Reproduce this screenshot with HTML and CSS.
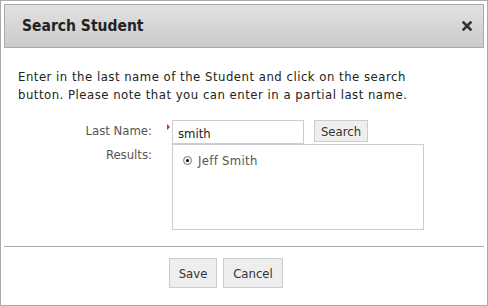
FILE: index.html
```html
<!DOCTYPE html>
<html>
<head>
<meta charset="utf-8">
<link rel="stylesheet" href="styles.css">
</head>
<body>
<div class="dialog">
  <div class="header">
    <span class="title">Search Student</span>
    <svg class="close" width="10" height="10" viewBox="0 0 10 10"><path d="M1.5 1.5 L8.5 8.5 M8.5 1.5 L1.5 8.5" stroke="#333" stroke-width="2.6" stroke-linecap="square"/></svg>
  </div>
  <div class="content">
    <p class="intro">Enter in the last name of the Student and click on the search button. Please note that you can enter in a partial last name.</p>
    <div class="form">
      <label class="label">Last Name:</label>
      <div class="field">
        <span class="req"></span>
        <input class="text" type="text" value="smith">
        <button class="btn search">Search</button>
      </div>
      <label class="label">Results:</label>
      <div class="results">
        <label class="option"><span class="radio"><span class="dot"></span></span>Jeff Smith</label>
      </div>
    </div>
  </div>
  <div class="footer">
    <button class="btn save">Save</button>
    <button class="btn cancel">Cancel</button>
  </div>
</div>
</body>
</html>
```
FILE: styles.css
```css
html, body {
  margin: 0;
  padding: 0;
  background: #fff;
}
.dialog {
  box-sizing: border-box;
  width: 488px;
  height: 306px;
  border: 1px solid #aaa;
  padding: 3px 3px 0;
  font-family: "DejaVu Sans Condensed", "DejaVu Sans", sans-serif;
  font-size: 13px;
  color: #222;
  display: flex;
  flex-direction: column;
}
.header {
  box-sizing: border-box;
  height: 44px;
  flex: none;
  border: 1px solid #aaa;
  background: linear-gradient(#e1e1e1, #cbcbcb);
  display: flex;
  align-items: center;
  justify-content: space-between;
  padding: 0 11px 0 17px;
}
.title {
  font-size: 15.5px;
  font-weight: bold;
  color: #222;
}
.close {
  display: block;
}
.content {
  padding: 20px 0 0 14px;
  flex: 1;
}
.intro {
  margin: 0;
  line-height: 18px;
  color: #222;
  letter-spacing: 0.5px;
  width: 400px;
}
.form {
  display: grid;
  grid-template-columns: 134px auto;
  column-gap: 20px;
  margin-top: 16px;
}
.label {
  text-align: right;
  color: #555;
  padding-top: 3px;
}
.field {
  display: flex;
  align-items: flex-start;
  position: relative;
}
.req {
  position: absolute;
  left: -5px;
  top: 4px;
  width: 0;
  height: 0;
  border-top: 3px solid transparent;
  border-bottom: 3px solid transparent;
  border-left: 3px solid #c0392b;
}
.text {
  box-sizing: border-box;
  width: 132px;
  height: 24px;
  border: 1px solid #ccc;
  margin: 0;
  padding: 2px 5px 0;
  font-family: inherit;
  font-size: 13px;
  color: #222;
  outline: none;
}
.btn {
  box-sizing: border-box;
  border: 1px solid #ccc;
  background: #eee;
  font-family: inherit;
  font-size: 13px;
  color: #333;
  margin: 0;
  padding: 0;
}
.search {
  margin-left: 10px;
  height: 22px;
  width: 54px;
}
.results {
  box-sizing: border-box;
  width: 252px;
  height: 86px;
  border: 1px solid #ccc;
  padding: 8px 10px;
}
.option {
  display: flex;
  align-items: center;
  gap: 6px;
  color: #555;
  letter-spacing: 0.3px;
}
.radio {
  box-sizing: border-box;
  width: 9px;
  height: 9px;
  border-radius: 50%;
  border: 1px solid #777;
  background: #f2f2f2;
  display: flex;
  align-items: center;
  justify-content: center;
}
.dot {
  width: 3px;
  height: 3px;
  border-radius: 50%;
  background: #000;
}
.footer {
  border-top: 1px solid #aaa;
  height: 59px;
  flex: none;
  display: flex;
  justify-content: flex-start;
  align-items: flex-start;
  gap: 6px;
  padding: 11px 0 0 165px;
  box-sizing: border-box;
}
.save {
  width: 48px;
  height: 30px;
}
.cancel {
  width: 60px;
  height: 30px;
}
```
